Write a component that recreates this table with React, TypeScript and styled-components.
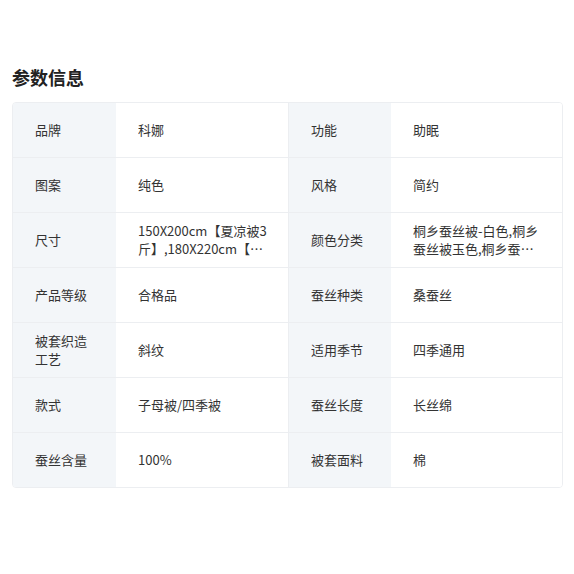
import styled, {createGlobalStyle} from 'styled-components'

const GlobalStyle = createGlobalStyle`
  body {
    margin: 0;
    background: #fff;
    font-family: "Microsoft YaHei", "Noto Sans CJK SC", "Liberation Sans", sans-serif;
    color: #333;
  }
`

const Page = styled.div`
  width: 574px;
  height: 574px;
  padding: 66px 11px 0 12px;
  box-sizing: border-box;
`

const Title = styled.h2`
  margin: 0 0 13px;
  font-size: 18px;
  line-height: 23px;
  font-weight: 700;
  color: #222;
`

const Table = styled.div`
  display: grid;
  grid-template-columns: 103px 172px 103px 1fr;
  border: 1px solid #eceef1;
  border-radius: 4px;
  overflow: hidden;
`

const Cell = styled.div<{$label?: boolean; $right?: boolean; $last?: boolean}>`
  height: ${p => (p.$last ? '54px' : '55px')};
  box-sizing: border-box;
  display: flex;
  align-items: center;
  font-size: 13px;
  line-height: 18px;
  background: ${p => (p.$label ? '#f3f6f9' : '#fff')};
  border-bottom: ${p => (p.$last ? 'none' : '1px solid #eceef1')};
  border-left: ${p => (p.$right ? '1px solid #eceef1' : 'none')};
  padding: 0 ${p => (p.$label ? '20px' : '18px')} 0 22px;
  color: #333;
`

const Text = styled.span`
  display: -webkit-box;
  -webkit-line-clamp: 2;
  -webkit-box-orient: vertical;
  overflow: hidden;
  word-break: break-all;
`

const rows: [string, string, string, string][] = [
  ['品牌', '科娜', '功能', '助眠'],
  ['图案', '纯色', '风格', '简约'],
  ['尺寸', '150X200cm【夏凉被3斤】,180X220cm【夏凉被4斤】,200X230cm【夏凉被5斤】', '颜色分类', '桐乡蚕丝被-白色,桐乡蚕丝被玉色,桐乡蚕丝被粉色'],
  ['产品等级', '合格品', '蚕丝种类', '桑蚕丝'],
  ['被套织造工艺', '斜纹', '适用季节', '四季通用'],
  ['款式', '子母被/四季被', '蚕丝长度', '长丝绵'],
  ['蚕丝含量', '100%', '被套面料', '棉'],
]

export default function App() {
  return (
    <>
      <GlobalStyle />
      <Page>
        <Title>参数信息</Title>
        <Table>
          {rows.map((r, i) => {
            const last = i === rows.length - 1
            return [
              <Cell key={`${i}a`} $label $last={last}><Text>{r[0]}</Text></Cell>,
              <Cell key={`${i}b`} $last={last}><Text>{r[1]}</Text></Cell>,
              <Cell key={`${i}c`} $label $right $last={last}><Text>{r[2]}</Text></Cell>,
              <Cell key={`${i}d`} $last={last}><Text>{r[3]}</Text></Cell>,
            ]
          })}
        </Table>
      </Page>
    </>
  )
}
